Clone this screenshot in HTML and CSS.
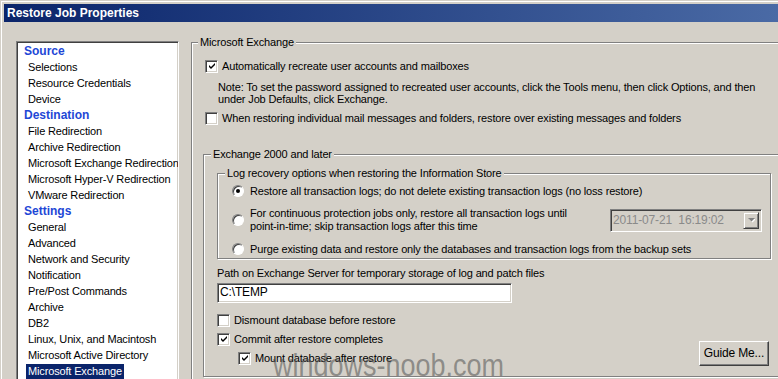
FILE: index.html
```html
<!DOCTYPE html>
<html lang="en">
<head>
    <meta charset="UTF-8">
    <title>Restore Job Properties</title>
    <link rel="stylesheet" href="styles.css">
</head>
<body>
    <div class="window">
        <div class="frame">
            <div class="titlebar">Restore Job Properties</div>
            <div class="dialog">
                <ul class="nav">
                    <li class="nav-head">Source</li>
                    <li><span>Selections</span></li>
                    <li><span>Resource Credentials</span></li>
                    <li><span>Device</span></li>
                    <li class="nav-head">Destination</li>
                    <li><span>File Redirection</span></li>
                    <li><span>Archive Redirection</span></li>
                    <li><span>Microsoft Exchange Redirection</span></li>
                    <li><span>Microsoft Hyper-V Redirection</span></li>
                    <li><span>VMware Redirection</span></li>
                    <li class="nav-head">Settings</li>
                    <li><span>General</span></li>
                    <li><span>Advanced</span></li>
                    <li><span>Network and Security</span></li>
                    <li><span>Notification</span></li>
                    <li><span>Pre/Post Commands</span></li>
                    <li><span>Archive</span></li>
                    <li><span>DB2</span></li>
                    <li><span>Linux, Unix, and Macintosh</span></li>
                    <li><span>Microsoft Active Directory</span></li>
                    <li class="active"><span>Microsoft Exchange</span></li>
                </ul>

                <div class="main">
                    <fieldset class="group group-exchange">
                        <legend>Microsoft Exchange</legend>

                        <div class="check-row recreate">
                            <span class="cb checked"><svg width="7" height="7" viewBox="0 0 7 7"><path d="M0 2 L2 4 L6 0 L6 2 L2 6 L0 4 Z" fill="#000"/></svg></span>
                            <span>Automatically recreate user accounts and mailboxes</span>
                        </div>
                        <p class="note">Note: To set the password assigned to recreated user accounts, click the Tools menu, then click Options, and then<br>under Job Defaults, click Exchange.</p>
                        <div class="check-row overwrite">
                            <span class="cb"></span>
                            <span>When restoring individual mail messages and folders, restore over existing messages and folders</span>
                        </div>

                        <fieldset class="group group-2000">
                            <legend>Exchange 2000 and later</legend>

                            <fieldset class="group group-log">
                                <legend>Log recovery options when restoring the Information Store</legend>
                                <div class="radio-row row-one">
                                    <span class="rb on"></span>
                                    <span>Restore all transaction logs; do not delete existing transaction logs (no loss restore)</span>
                                </div>
                                <div class="radio-row row-two">
                                    <span class="rb"></span>
                                    <span class="two-line">For continuous protection jobs only, restore all transaction logs until<br>point-in-time; skip transaction logs after this time</span>
                                    <div class="combo">
                                        <span class="combo-text">2011-07-21  16:19:02</span>
                                        <span class="combo-btn"><svg width="7" height="5" viewBox="0 0 7 5"><path d="M1 1 H8 L4.5 4.5 Z" fill="#fff"/><path d="M0 0 H7 L3.5 3.5 Z" fill="#808080"/></svg></span>
                                    </div>
                                </div>
                                <div class="radio-row row-three">
                                    <span class="rb"></span>
                                    <span>Purge existing data and restore only the databases and transaction logs from the backup sets</span>
                                </div>
                            </fieldset>

                            <div class="path-label">Path on Exchange Server for temporary storage of log and patch files</div>
                            <div class="path-input">C:\TEMP</div>

                            <div class="bottom-row">
                                <div class="checks">
                                    <div class="check-row">
                                        <span class="cb"></span>
                                        <span>Dismount database before restore</span>
                                    </div>
                                    <div class="check-row">
                                        <span class="cb checked"><svg width="7" height="7" viewBox="0 0 7 7"><path d="M0 2 L2 4 L6 0 L6 2 L2 6 L0 4 Z" fill="#000"/></svg></span>
                                        <span>Commit after restore completes</span>
                                    </div>
                                    <div class="check-row sub">
                                        <span class="cb checked"><svg width="7" height="7" viewBox="0 0 7 7"><path d="M0 2 L2 4 L6 0 L6 2 L2 6 L0 4 Z" fill="#000"/></svg></span>
                                        <span>Mount database after restore</span>
                                    </div>
                                </div>
                                <div class="btn">Guide Me...</div>
                            </div>
                        </fieldset>
                    </fieldset>
                </div>
            </div>
        </div>
        <div class="watermark">windows-noob.com</div>
    </div>
</body>
</html>
```

FILE: styles.css
```css
* {
    margin: 0;
    padding: 0;
    box-sizing: border-box;
}

body {
    width: 778px;
    height: 379px;
    overflow: hidden;
    background: #d4d0c8;
    font-family: 'Liberation Sans', Arial, sans-serif;
    font-size: 11px;
    letter-spacing: -0.15px;
    color: #000;
}

.window {
    position: relative;
    height: 379px;
    overflow: hidden;
    border-top: 1px solid #d4d0c8;
    border-left: 1px solid #d4d0c8;
}

.frame {
    height: 100%;
    border-top: 1px solid #fff;
    border-left: 1px solid #fff;
    padding: 2px 0 0 2px;
}

.titlebar {
    height: 18px;
    line-height: 18px;
    padding-left: 3px;
    background: linear-gradient(to right, #0a246a, #4a6aa5);
    color: #fff;
    font-weight: bold;
    font-size: 12px;
    letter-spacing: 0;
}

.dialog {
    display: flex;
    align-items: flex-start;
    padding: 14px 0 0 12px;
}

/* left tree */
.nav {
    list-style: none;
    flex: none;
    width: 163px;
    height: 400px;
    margin-top: 5px;
    padding: 1px;
    overflow: hidden;
    white-space: nowrap;
    background: #fff;
    border: 1px solid;
    border-color: #808080 #fff #fff #808080;
    box-shadow: inset 1px 1px 0 #404040, inset -1px -1px 0 #d4d0c8;
}

.nav li {
    height: 16px;
    line-height: 16px;
}

.nav li span {
    margin-left: 8px;
    padding: 0 2px;
}

.nav .nav-head {
    padding-left: 6px;
    color: #1e47d6;
    font-weight: bold;
    font-size: 12px;
    letter-spacing: 0;
}

.nav .active span {
    display: inline-block;
    height: 15px;
    line-height: 15px;
    background: #0a246a;
    color: #fff;
}

/* right side */
.main {
    flex: none;
    margin-left: 12px;
}

.group {
    min-width: 0;
    padding: 0;
    border: 1px solid #808080;
    box-shadow: inset 1px 1px 0 #fff, 1px 1px 0 #fff;
}

.group legend {
    margin-left: 6px;
    padding: 0 2px;
    line-height: 13px;
    background: #d4d0c8;
}

.group-exchange {
    width: 620px;
    height: 420px;
}

.check-row {
    display: flex;
    align-items: center;
    gap: 4px;
    height: 16px;
    white-space: nowrap;
}

.cb {
    flex: none;
    width: 13px;
    height: 13px;
    display: flex;
    align-items: center;
    justify-content: center;
    background: #fff;
    border: 1px solid;
    border-color: #808080 #fff #fff #808080;
    box-shadow: inset 1px 1px 0 #404040, inset -1px -1px 0 #d4d0c8;
}

.cb svg {
    margin: 1px 0 0 1px;
}

.recreate {
    margin: 9px 0 0 13px;
}

.note {
    margin: 7px 0 0 26px;
    line-height: 12px;
    white-space: nowrap;
}

.overwrite {
    margin: 5px 0 0 13px;
}

.group-2000 {
    width: 600px;
    margin: 22px 0 0 11px;
    padding-bottom: 10px;
}

.group-2000 legend {
    margin-left: 7px;
}

.group-log {
    width: 554px;
    margin: 6px 0 0 13px;
    padding-bottom: 1px;
}

.radio-row {
    display: flex;
    align-items: center;
    gap: 6px;
    margin-left: 14px;
    height: 16px;
    white-space: nowrap;
}

.row-one {
    margin-top: 3px;
}

.row-two {
    margin-top: 8px;
    height: 26px;
}

.row-three {
    margin-top: 8px;
}

.two-line {
    line-height: 13px;
}

.rb {
    flex: none;
    width: 12px;
    height: 12px;
    border-radius: 50%;
    background: #fff;
    border: 1px solid;
    border-color: #808080 #fff #fff #808080;
    box-shadow: inset 1px 1px 0 #404040;
    display: flex;
    align-items: center;
    justify-content: center;
}

.rb.on::after {
    content: "";
    width: 4px;
    height: 4px;
    border-radius: 50%;
    background: #000;
}

.combo {
    display: flex;
    align-items: center;
    justify-content: space-between;
    width: 152px;
    height: 23px;
    margin: 0 8px 0 auto;
    padding: 0 2px;
    background: #d4d0c8;
    border: 1px solid;
    border-color: #808080 #fff #fff #808080;
    box-shadow: inset 1px 1px 0 #404040, inset -1px -1px 0 #d4d0c8;
    color: #8a8a8a;
}

.combo-text {
    white-space: pre;
    font-size: 12px;
}

.combo-btn {
    width: 16px;
    height: 17px;
    display: flex;
    align-items: center;
    justify-content: center;
    border: 1px solid;
    border-color: #d4d0c8 #404040 #404040 #d4d0c8;
    box-shadow: inset 1px 1px 0 #fff, inset -1px -1px 0 #808080;
}

.path-label {
    margin: 8px 0 0 13px;
    line-height: 13px;
}

.path-input {
    width: 295px;
    height: 20px;
    margin: 3px 0 0 13px;
    padding: 0 2px;
    line-height: 16px;
    font-size: 12px;
    background: #fff;
    border: 1px solid;
    border-color: #808080 #fff #fff #808080;
    box-shadow: inset 1px 1px 0 #404040, inset -1px -1px 0 #d4d0c8;
}

.bottom-row {
    display: flex;
    justify-content: space-between;
    align-items: flex-end;
    width: 552px;
    margin: 9px 0 0 13px;
}

.checks {
    display: flex;
    flex-direction: column;
    gap: 3px;
}

.check-row.sub {
    margin-left: 21px;
}

.btn {
    width: 70px;
    height: 25px;
    line-height: 23px;
    text-align: center;
    font-size: 12px;
    border: 1px solid;
    border-color: #fff #404040 #404040 #fff;
    box-shadow: inset -1px -1px 0 #808080;
}

.watermark {
    position: absolute;
    left: 272px;
    top: 349px;
    font-size: 31px;
    line-height: 31px;
    letter-spacing: 0;
    transform: scaleX(0.87);
    transform-origin: left top;
    color: rgba(80, 80, 80, 0.55);
    white-space: nowrap;
}
```
